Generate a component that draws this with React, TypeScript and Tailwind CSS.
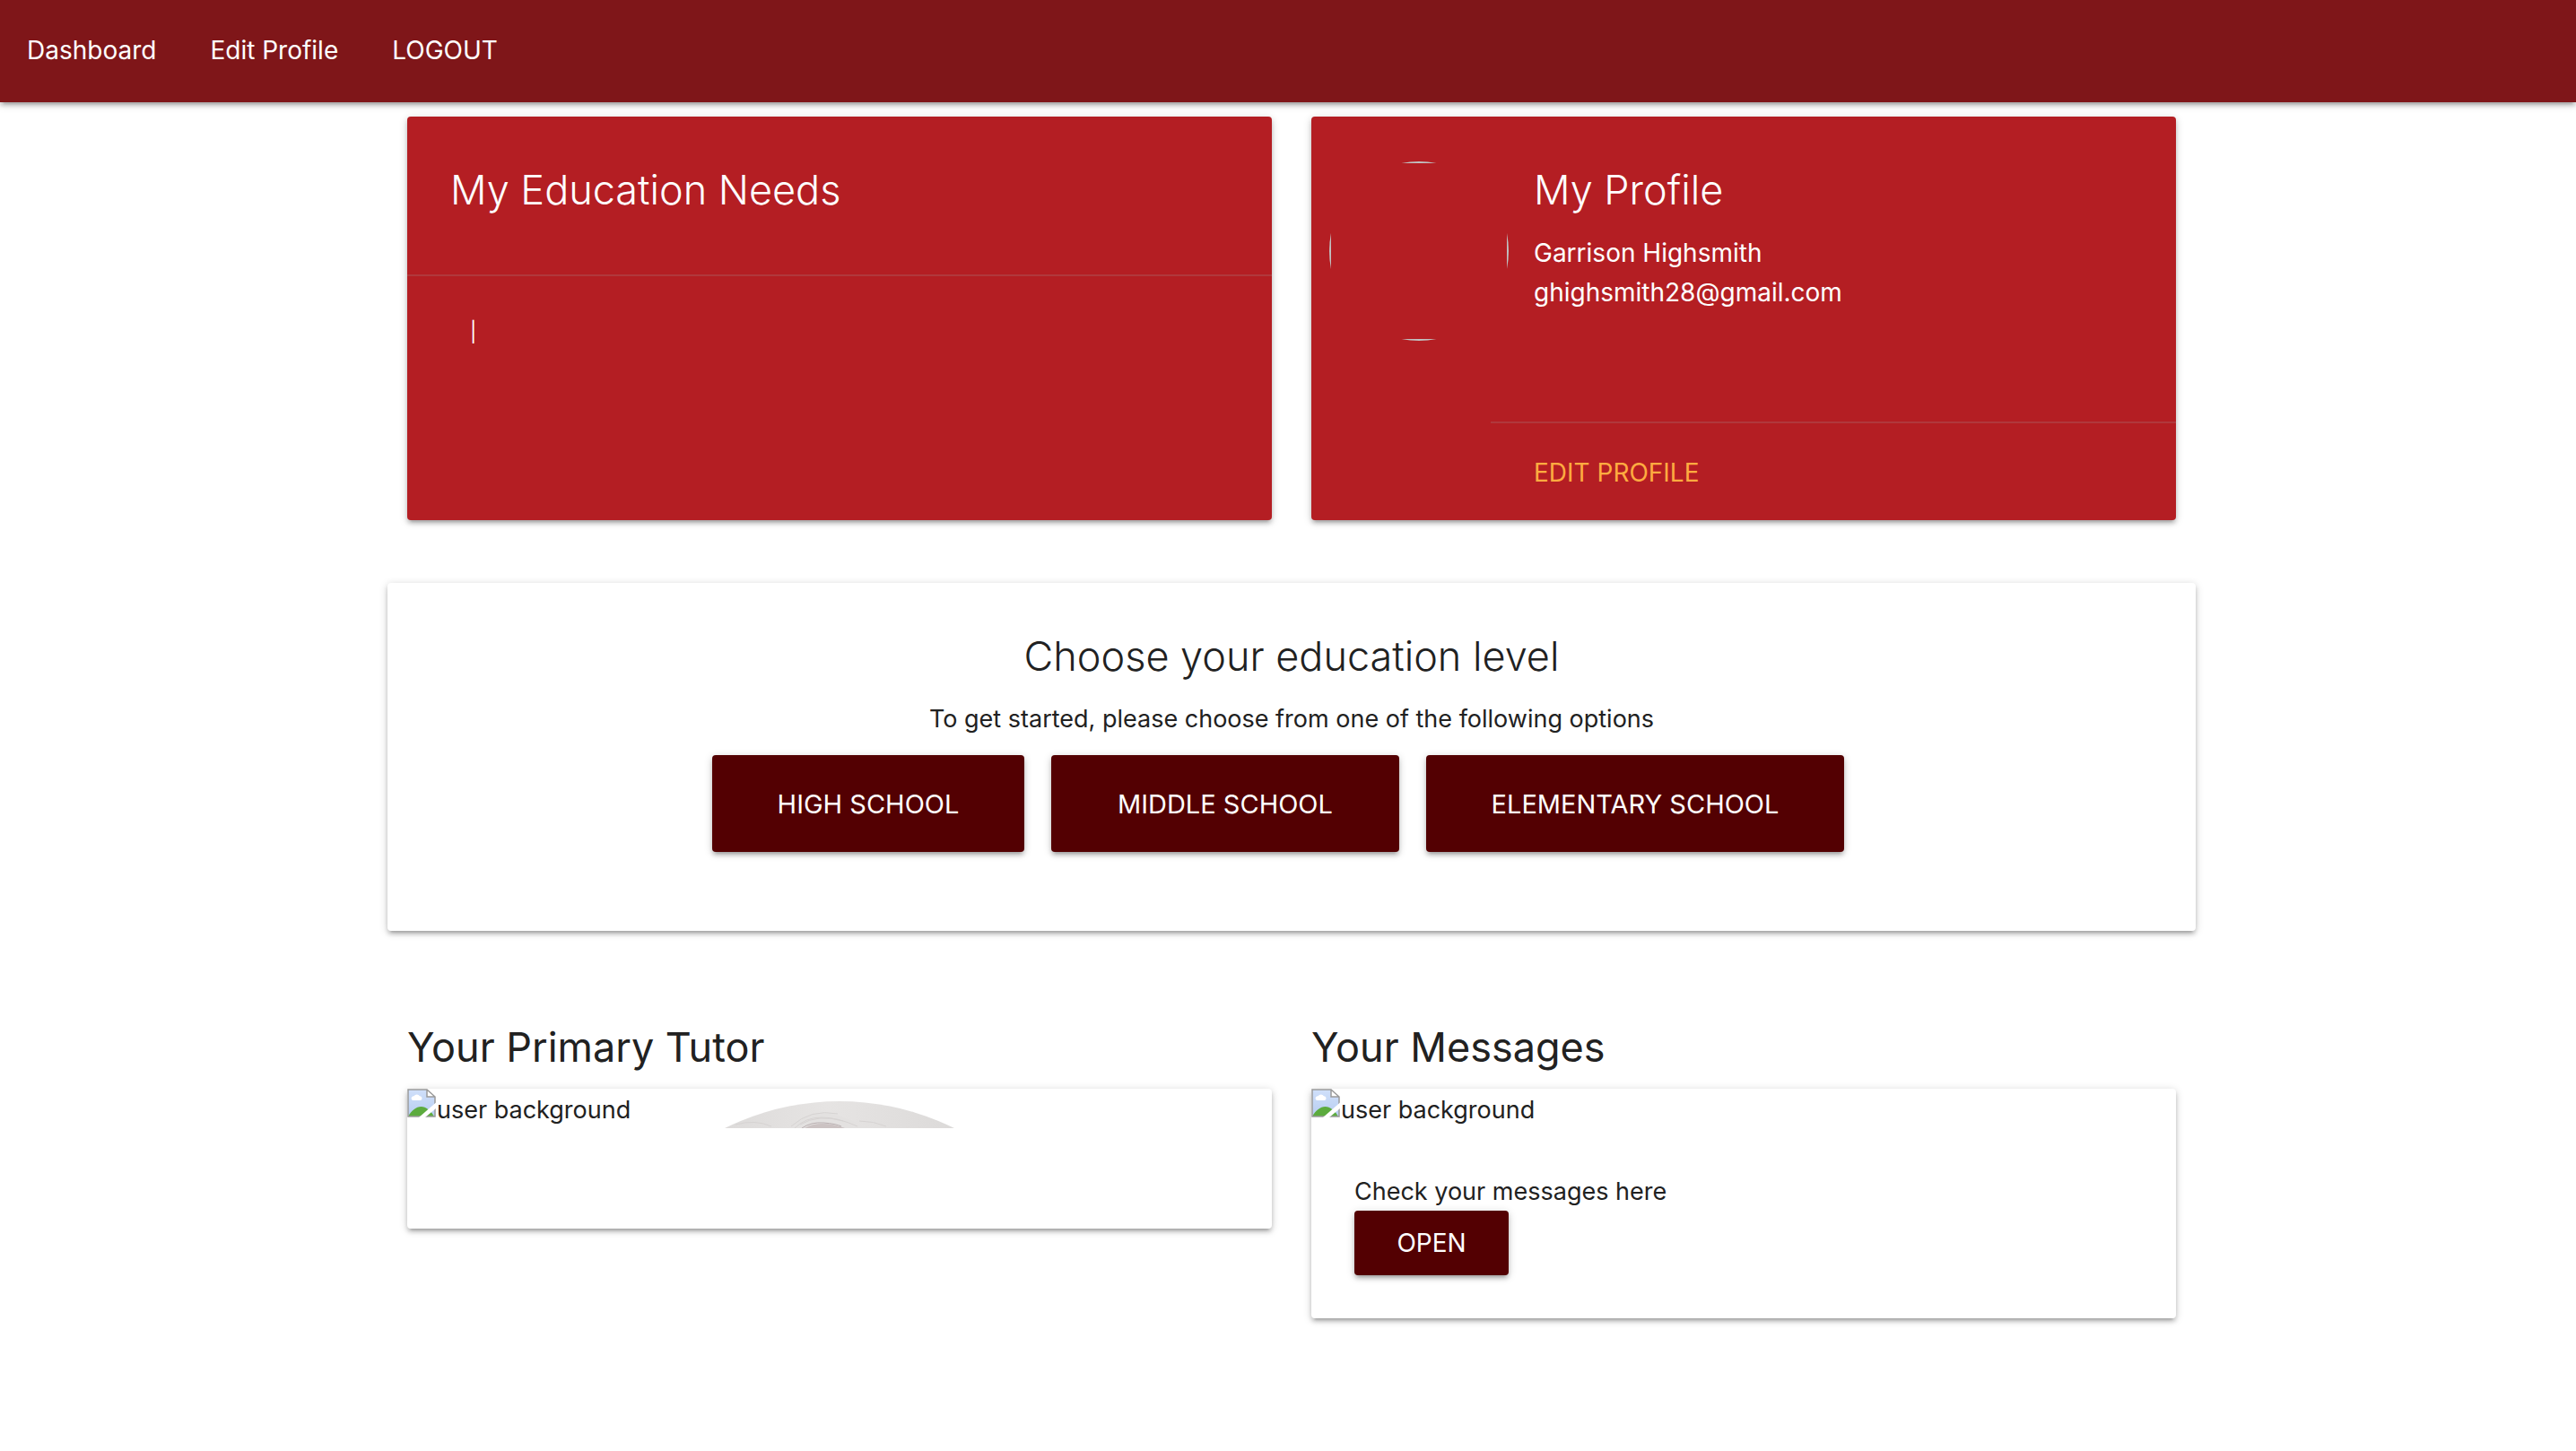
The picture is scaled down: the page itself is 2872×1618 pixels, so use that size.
import type { ReactNode } from "react";

const elevation =
  "shadow-[0_4px_4px_0_rgba(0,0,0,0.14),0_6px_2px_-4px_rgba(0,0,0,0.12),0_2px_10px_0_rgba(0,0,0,0.2)]";

function BrokenImage() {
  return (
    <svg width="32" height="32" viewBox="0 0 32 32" className="block shrink-0" aria-hidden="true">
      <defs>
        <linearGradient id="sky" x1="0" y1="0" x2="0" y2="1">
          <stop offset="0" stopColor="#d0e0fa" />
          <stop offset="1" stopColor="#b7cdf1" />
        </linearGradient>
      </defs>
      <path d="M1 1H22L31 9V31H1Z" fill="url(#sky)" />
      <path d="M1 31C5 24 10 20 15.500 20S26 24 30 31Z" fill="#5cab3e" />
      <path d="M6 13a2.500 2.500 0 0 1 0-4.500q1 -.5 1.500 -.3a4 4 0 0 1 6.500 0a2.500 2.500 0 0 1 1 4.800Z" fill="#fff" />
      <path d="M22 1V9H31Z" fill="#fff" />
      <path d="M1 1H22L31 9V31H1Z M22 1V9H31" fill="none" stroke="#9a9a9a" strokeWidth="1.500" />
      <path d="M32 15.500L13 32H20L32 22Z" fill="#fff" />
    </svg>
  );
}

function UserBackground({ children }: { children?: ReactNode }) {
  return (
    <div className="relative flex h-11 items-start overflow-hidden">
      <BrokenImage />
      <span className="ml-px leading-12">user background</span>
      {children}
    </div>
  );
}

function TutorPortrait() {
  return (
    <svg
      viewBox="0 0 256 30"
      className="absolute bottom-0 left-1/2 h-[30px] w-[256px] -translate-x-1/2"
      aria-hidden="true"
    >
      <defs>
        <clipPath id="portrait">
          <circle cx="128" cy="288" r="288" />
        </clipPath>
        <linearGradient id="backdrop" x1="0" y1="0" x2="1" y2="0">
          <stop offset="0" stopColor="#dddbda" />
          <stop offset="0.45" stopColor="#e6e4e3" />
          <stop offset="1" stopColor="#dcdad9" />
        </linearGradient>
      </defs>
      <g clipPath="url(#portrait)">
        <rect width="256" height="30" fill="url(#backdrop)" />
        <path d="M72 30Q88 13 108 13T158 30Z" fill="#e3e1e0" />
        <path d="M89 30Q97 25 109 25T134 30Z" fill="#cbc2c2" />
        <path
          d="M78 30Q90 18 108 18T148 28M74 28Q96 8 126 14M84 26Q104 14 132 22M12 26Q34 20 52 28M150 22Q166 22 180 28"
          fill="none"
          stroke="#d6d3d2"
        />
        <path d="M86 30Q96 23 110 24T130 28" fill="none" stroke="#b9afb0" />
      </g>
    </svg>
  );
}

const navLinks = ["Dashboard", "Edit Profile", "LOGOUT"];
const levels = [
  { label: "HIGH SCHOOL", width: "w-[348px]" },
  { label: "MIDDLE SCHOOL", width: "w-[388px]" },
  { label: "ELEMENTARY SCHOOL", width: "w-[466px]" },
];

export default function App() {
  return (
    <div className="min-h-screen bg-white font-['Inter',sans-serif] text-[27px] leading-11 text-[#212121]">
      <nav className={`relative h-[114px] bg-[#7f1619] text-[28px] text-white ${elevation}`}>
        <ul className="flex">
          {navLinks.map((label) => (
            <li key={label}>
              <a href="#" className="block px-[30px] leading-[112px]">
                {label}
              </a>
            </li>
          ))}
        </ul>
      </nav>

      <main className="mx-auto max-w-[2024px] pl-2">
        <section className="grid grid-cols-2 gap-11 px-[22px] pt-4 text-[28px]">
          <div className={`h-[450px] rounded bg-[#b41e23] text-white ${elevation}`}>
            <div className="h-[176px] p-12">
              <h2 className="text-[45px] leading-[68px] font-light">My Education Needs</h2>
            </div>
            <div className="border-t-2 border-[#a0a0a0]/20 px-[70px] py-10">
              <span aria-hidden="true" className="block text-[22px]">|</span>
            </div>
          </div>

          <div className={`flex h-[450px] rounded bg-[#b41e23] text-white ${elevation}`}>
            <div className="w-[200px] shrink-0 pt-[50px] pl-5">
              <div role="img" aria-label="Profile picture" className="size-[200px] overflow-hidden rounded-full">
                <div className="size-full border-2 border-[#c0c0c0]" />
              </div>
            </div>
            <div className="flex grow flex-col">
              <div className="grow p-12">
                <h2 className="text-[45px] leading-[68px] font-light">My Profile</h2>
                <p className="pt-[14px]">
                  Garrison Highsmith
                  <br />
                  ghighsmith28@gmail.com
                </p>
              </div>
              <div className="border-t-2 border-[#a0a0a0]/20 px-12 py-8">
                <a href="#" className="block pt-0.5 leading-[42px] text-[#ffab40]">
                  EDIT PROFILE
                </a>
              </div>
            </div>
          </div>
        </section>

        <section className={`mt-[70px] h-[388px] rounded bg-white p-12 text-center ${elevation}`}>
          <h2 className="text-[45px] leading-[68px] font-light">Choose your education level</h2>
          <p className="pt-[14px]">To get started, please choose from one of the following options</p>
          <div className="mt-[18px] flex justify-center text-[29px]">
            {levels.map(({ label, width }) => (
              <button
                key={label}
                type="button"
                className={`mr-[30px] h-[108px] rounded bg-[#530002] pt-0.5 text-white ${width} ${elevation}`}
              >
                {label}
              </button>
            ))}
          </div>
        </section>

        <section className="grid grid-cols-2 items-start gap-11 px-[22px] pt-24">
          <div>
            <h2 className="text-[45px] leading-[68px]">Your Primary Tutor</h2>
            <div className={`mt-3 rounded bg-white pb-28 ${elevation}`}>
              <UserBackground>
                <TutorPortrait />
              </UserBackground>
            </div>
          </div>
          <div>
            <h2 className="text-[45px] leading-[68px]">Your Messages</h2>
            <div className={`mt-3 rounded bg-white ${elevation}`}>
              <UserBackground />
              <div className="px-12 pt-[50px] pb-12">
                <p className="leading-[42px]">Check your messages here</p>
                <button
                  type="button"
                  className={`block h-[72px] w-[172px] rounded bg-[#530002] text-[28px] text-white ${elevation}`}
                >
                  OPEN
                </button>
              </div>
            </div>
          </div>
        </section>
      </main>
    </div>
  );
}
